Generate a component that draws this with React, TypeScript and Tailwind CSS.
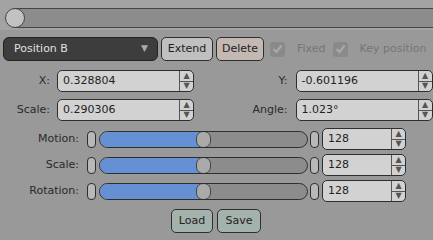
import { useState } from "react"

const font = { fontFamily: '"DejaVu Sans", sans-serif' }

function Spin({ value, className }: { value: string; className?: string }) {
  return (
    <div className={`flex h-[22px] rounded-[5px] border border-[#2e2e2e] bg-[#d2d2d2] ${className ?? ""}`}>
      <div className="flex flex-1 items-center pl-[5px] text-[11px] text-[#222]">{value}</div>
      <div className="flex w-[14px] flex-col border-l border-[#555]">
        <div className="flex flex-1 items-center justify-center border-b border-[#555] text-[8px] leading-none text-[#555]">▲</div>
        <div className="flex flex-1 items-center justify-center text-[8px] leading-none text-[#555]">▼</div>
      </div>
    </div>
  )
}

function Check({ label }: { label: string }) {
  return (
    <div className="flex items-center gap-[12px] whitespace-nowrap">
      <div className="flex h-[15px] w-[15px] items-center justify-center rounded-[3px] bg-[#8a8a8a]">
        <svg width="11" height="10" viewBox="0 0 11 10">
          <path d="M1.5 5 L4.5 8 L9.5 1.5" stroke="#a8a8a8" strokeWidth="2.2" fill="none" />
        </svg>
      </div>
      <span className="text-[11px] text-[#767676]">{label}</span>
    </div>
  )
}

function SliderRow({ label, value }: { label: string; value: number }) {
  const pct = (value / 255) * 100
  return (
    <div className="flex h-[22px] items-center">
      <div className="w-[81px] pr-[2px] text-right text-[11px] text-[#2a2a2a]">{label}</div>
      <div className="ml-[6px] h-[17px] w-[9px] rounded-[4px] border border-[#2e2e2e] bg-[#b8b8b8]" />
      <div className="relative ml-[3px] h-[17px] w-[209px] overflow-hidden rounded-[9px] border border-[#2e2e2e] bg-[#8c8c8c]">
        <div className="h-full bg-[#6591d4]" style={{ width: `${pct}%` }} />
        <div
          className="absolute top-[-1px] h-[17px] w-[15px] rounded-[7px] border border-[#444] bg-[#aaaaaa]"
          style={{ left: `calc(${pct}% - 8px)` }}
        />
      </div>
      <div className="ml-[2px] h-[17px] w-[9px] rounded-[4px] border border-[#2e2e2e] bg-[#b8b8b8]" />
      <Spin value={String(value)} className="ml-[3px] w-[84px]" />
    </div>
  )
}

export default function App() {
  const [pos] = useState("Position B")

  return (
    <div className="h-[240px] w-[433px] overflow-hidden bg-[#999999]" style={font}>
      {/* top scroller */}
      <div className="bg-[#a3a3a3] pt-[8px] pb-[2px]">
        <div className="relative ml-[13px] h-[20px] border-y border-[#444] bg-[#8c8c8c]">
          <div className="absolute left-[-8px] top-[-1px] h-[20px] w-[20px] rounded-full border border-[#444] bg-[#c2c2c2]" />
        </div>
      </div>

      <div className="mt-[7px] flex h-[24px] items-center px-[3px]">
        <div className="flex h-[24px] w-[155px] items-center justify-between rounded-[6px] border border-[#222] bg-[#3d3d3d] pl-[10px] pr-[9px] text-[11px] text-[#e0e0e0]">
          <span>{pos}</span>
          <span className="text-[9px] text-[#aaa]">▼</span>
        </div>
        <button className="ml-[3px] h-[24px] w-[52px] rounded-[5px] border border-[#2e2e2e] bg-[#c0c0c0] text-[11px] text-[#222]">Extend</button>
        <button className="ml-[3px] h-[24px] w-[48px] rounded-[5px] border border-[#2e2e2e] bg-[#c4b9b2] text-[11px] text-[#222]">Delete</button>
        <div className="ml-[6px] flex items-center gap-[7px]">
          <Check label="Fixed" />
          <Check label="Key position" />
        </div>
      </div>

      <div className="mt-[9px] grid grid-cols-2 gap-y-[7px]">
        <div className="flex items-center">
          <div className="w-[50px] text-right text-[11px] text-[#2a2a2a]">X:</div>
          <Spin value="0.328804" className="ml-[7px] w-[137px]" />
        </div>
        <div className="flex items-center">
          <div className="w-[71px] text-right text-[11px] text-[#2a2a2a]">Y:</div>
          <Spin value="-0.601196" className="ml-[8px] w-[137px]" />
        </div>
        <div className="flex items-center">
          <div className="w-[50px] text-right text-[11px] text-[#2a2a2a]">Scale:</div>
          <Spin value="0.290306" className="ml-[7px] w-[137px]" />
        </div>
        <div className="flex items-center">
          <div className="w-[71px] text-right text-[11px] text-[#2a2a2a]">Angle:</div>
          <Spin value="1.023°" className="ml-[8px] w-[137px]" />
        </div>
      </div>

      <div className="mt-[7px] flex flex-col gap-[4px]">
        <SliderRow label="Motion:" value={128} />
        <SliderRow label="Scale:" value={128} />
        <SliderRow label="Rotation:" value={128} />
      </div>

      <div className="mt-[7px] flex gap-[4px] pl-[171px]">
        <button className="h-[24px] w-[42px] rounded-[5px] border border-[#2e2e2e] bg-[#a3b2ab] text-[11px] text-[#222]">Load</button>
        <button className="h-[24px] w-[44px] rounded-[5px] border border-[#2e2e2e] bg-[#a3b2ab] text-[11px] text-[#222]">Save</button>
      </div>
    </div>
  )
}
